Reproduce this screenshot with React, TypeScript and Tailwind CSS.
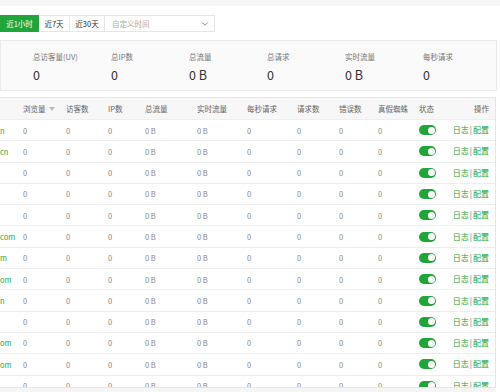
import React from 'react';
import { ChevronDown } from 'lucide-react';

const stats = [
  { label: '总访客量(UV)', value: '0' },
  { label: '总IP数', value: '0' },
  { label: '总流量', value: '0 B' },
  { label: '总请求', value: '0' },
  { label: '实时流量', value: '0 B' },
  { label: '每秒请求', value: '0' },
];

// 域名列被横向滚动裁掉，只剩尾部
const tails = ['n', 'cn', '', '', '', 'com', 'm', 'om', 'n', '', 'om', 'om', ''];

const cols = [
  { key: 'pv', label: '浏览量', w: 'w-[43px]' },
  { key: 'uv', label: '访客数', w: 'w-[42px]' },
  { key: 'ip', label: 'IP数', w: 'w-[37px]' },
  { key: 'flow', label: '总流量', w: 'w-[52px]' },
  { key: 'rt', label: '实时流量', w: 'w-[50px]' },
  { key: 'qps', label: '每秒请求', w: 'w-[50px]' },
  { key: 'req', label: '请求数', w: 'w-[42px]' },
  { key: 'err', label: '错误数', w: 'w-[39px]' },
  { key: 'spider', label: '真假蜘蛛', w: 'w-[41px]' },
];

const rowValues = ['0', '0', '0', '0 B', '0 B', '0', '0', '0', '0'];

function Toggle() {
  return (
    <div className="flex h-[10px] w-[17px] items-center justify-end rounded-full bg-[#20a53a] px-[1.5px]">
      <div className="h-[7px] w-[7px] rounded-full bg-white" />
    </div>
  );
}

export default function App() {
  return (
    <div className="flex h-[392px] w-[500px] flex-col overflow-hidden bg-white font-['Noto_Sans_CJK_SC',sans-serif] text-[#666]">
      <div className="h-[6px] shrink-0 bg-[#f5f5f5]" />

      <div className="mt-[9px] flex h-[17px] shrink-0 text-[7.5px]">
        <button className="w-[39px] shrink-0 bg-[#20a53a] p-0 text-white">近1小时</button>
        <button className="w-[31px] shrink-0 border-y border-r border-[#e6e6e6] p-0 text-[#333]">近7天</button>
        <button className="w-[35px] shrink-0 border-y border-r border-[#e6e6e6] p-0 text-[#333]">近30天</button>
        <div className="flex w-[110px] shrink-0 items-center justify-between border-y border-r border-[#e6e6e6] pl-[7px] pr-[4px] text-[#aaa]">
          <span>自定义时间</span>
          <ChevronDown size={10} strokeWidth={1.6} className="text-[#555]" />
        </div>
      </div>

      <div className="mr-[3px] mt-[8px] flex h-[51px] shrink-0 border border-[#eaeaea] bg-[#fafafa] pl-[32px]">
        {stats.map((s) => (
          <div key={s.label} className="flex w-[78px] shrink-0 flex-col pt-[10px]">
            <span className="text-[7.5px] leading-[12px] text-[#777]">{s.label}</span>
            <span className="mt-[3px] text-[12.5px] leading-[17px] text-[#333]">{s.value}</span>
          </div>
        ))}
      </div>

      <div className="mr-[4px] mt-[6px] h-[290px] shrink-0 overflow-hidden border-r border-t border-[#e6e6e6] text-[7.5px]">
        <div className="flex h-[22px] items-center border-b border-[#eee] bg-[#f7f7f7] pr-[6px]">
          <div className="w-[23px] shrink-0" />
          {cols.map((c) => (
            <div key={c.key} className={`${c.w} flex shrink-0 items-center gap-[3px]`}>
              <span>{c.label}</span>
              {c.key === 'pv' && (
                <span className="h-0 w-0 border-x-[3px] border-t-[4px] border-x-transparent border-t-[#bbb]" />
              )}
            </div>
          ))}
          <div className="w-[29px] shrink-0">状态</div>
          <div className="flex-1 whitespace-nowrap text-right">操作</div>
        </div>

        {tails.map((t, i) => (
          <div key={i} className="flex h-[21.3px] items-center border-b border-[#eee] pr-[6px]">
            <div className="w-[23px] shrink-0 text-[#20a53a]">{t}</div>
            {cols.map((c, j) => (
              <div key={c.key} className={`${c.w} shrink-0 text-[#888]`}>
                {rowValues[j]}
              </div>
            ))}
            <div className="w-[29px] shrink-0">
              <Toggle />
            </div>
            <div className="flex-1 whitespace-nowrap text-right text-[8px] text-[#20a53a]">
              日志<span className="mx-[1px] text-[#666]">|</span>配置
            </div>
          </div>
        ))}
      </div>
      <div className="mr-[4px] flex-1 border-t border-[#e6e6e6] bg-[#f5f5f5]" />
    </div>
  );
}
